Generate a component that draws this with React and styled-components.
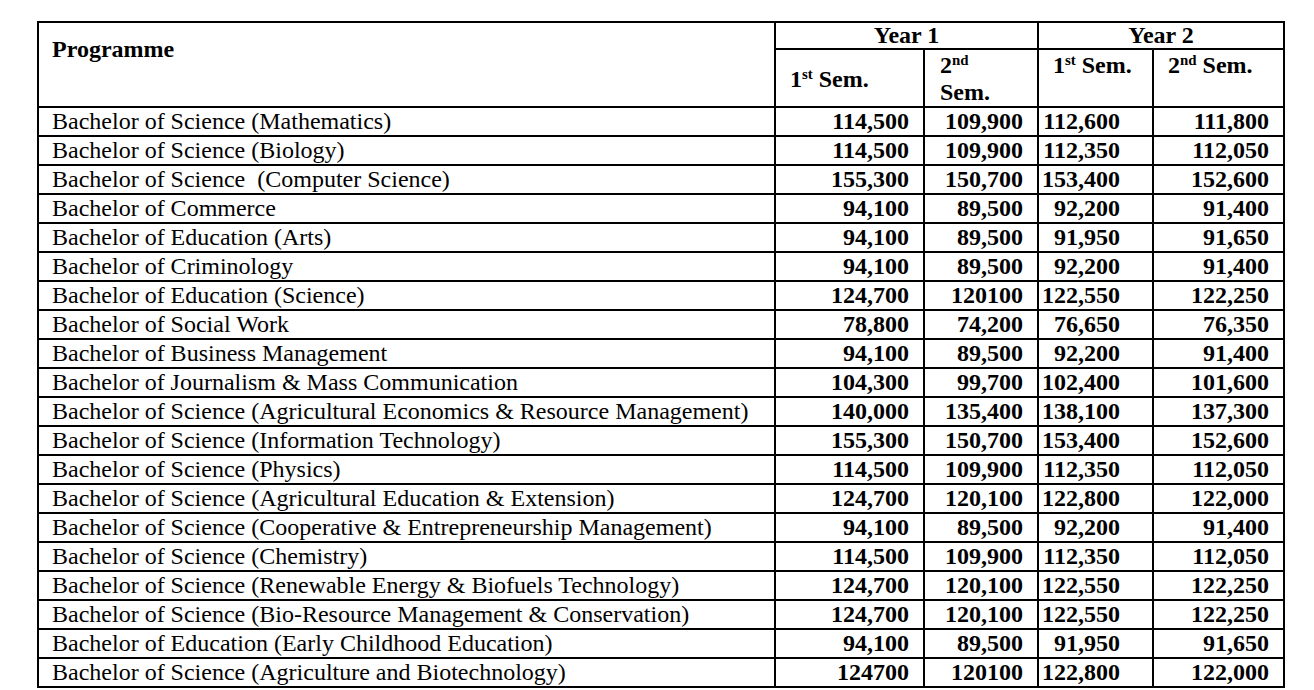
import React from 'react';
import styled, { createGlobalStyle } from 'styled-components';

const GlobalStyle = createGlobalStyle`
  html, body { margin: 0; padding: 0; background: #ffffff; }
  body { font-family: "Liberation Serif", "Times New Roman", serif; color: #000; }
`;

const Page = styled.div`
  padding: 21px 0 0 37px;
`;

const Table = styled.table`
  border-collapse: collapse;
  table-layout: fixed;
  width: 1248px;
  font-family: "Liberation Serif", "Times New Roman", serif;
  font-size: 24px;
  color: #000;
  border: 2px solid #000;
`;

const HeadCell = styled.th`
  border: 2px solid #000;
  font-weight: 700;
  line-height: ${(p) => (p.$short ? '25px' : '27px')};
  padding: ${(p) => p.$pad || '0 14px'};
  text-align: ${(p) => p.$align || 'left'};
  vertical-align: ${(p) => p.$valign || 'top'};
  white-space: ${(p) => (p.$nowrap ? 'nowrap' : 'normal')};
`;

const Sup = styled.sup`
  font-size: 0.62em;
  line-height: 0;
  vertical-align: 0.55em;
`;

const NameCell = styled.td`
  border: 2px solid #000;
  padding: 0 13px;
  line-height: 27px;
  text-align: left;
  white-space: nowrap;
  overflow: hidden;
`;

const NumCell = styled.td`
  border: 2px solid #000;
  padding: 0 ${(p) => p.$right || 14}px 0 0;
  line-height: 27px;
  font-weight: 700;
  text-align: right;
  white-space: nowrap;
`;

const rows = [
  ['Bachelor of Science (Mathematics)', '114,500', '109,900', '112,600', '111,800'],
  ['Bachelor of Science (Biology)', '114,500', '109,900', '112,350', '112,050'],
  ['Bachelor of Science\u00a0 (Computer Science)', '155,300', '150,700', '153,400', '152,600'],
  ['Bachelor of Commerce', '94,100', '89,500', '92,200', '91,400'],
  ['Bachelor of Education (Arts)', '94,100', '89,500', '91,950', '91,650'],
  ['Bachelor of Criminology', '94,100', '89,500', '92,200', '91,400'],
  ['Bachelor of Education (Science)', '124,700', '120100', '122,550', '122,250'],
  ['Bachelor of Social Work', '78,800', '74,200', '76,650', '76,350'],
  ['Bachelor of Business Management', '94,100', '89,500', '92,200', '91,400'],
  ['Bachelor of Journalism & Mass Communication', '104,300', '99,700', '102,400', '101,600'],
  ['Bachelor of Science (Agricultural Economics & Resource Management)', '140,000', '135,400', '138,100', '137,300'],
  ['Bachelor of Science (Information Technology)', '155,300', '150,700', '153,400', '152,600'],
  ['Bachelor of Science (Physics)', '114,500', '109,900', '112,350', '112,050'],
  ['Bachelor of Science (Agricultural Education & Extension)', '124,700', '120,100', '122,800', '122,000'],
  ['Bachelor of Science (Cooperative & Entrepreneurship Management)', '94,100', '89,500', '92,200', '91,400'],
  ['Bachelor of Science (Chemistry)', '114,500', '109,900', '112,350', '112,050'],
  ['Bachelor of Science (Renewable Energy & Biofuels Technology)', '124,700', '120,100', '122,550', '122,250'],
  ['Bachelor of Science (Bio-Resource Management & Conservation)', '124,700', '120,100', '122,550', '122,250'],
  ['Bachelor of Education (Early Childhood Education)', '94,100', '89,500', '91,950', '91,650'],
  ['Bachelor of Science (Agriculture and Biotechnology)', '124700', '120100', '122,800', '122,000'],
];

export default function App() {
  return (
    <>
      <GlobalStyle />
      <Page>
        <Table>
          <colgroup>
            <col style={{ width: 737 }} />
            <col style={{ width: 149 }} />
            <col style={{ width: 114 }} />
            <col style={{ width: 115 }} />
            <col style={{ width: 131 }} />
          </colgroup>
          <thead>
            <tr>
              <HeadCell rowSpan={2} $pad="13px 13px 0">Programme</HeadCell>
              <HeadCell colSpan={2} $align="center" $short>Year 1</HeadCell>
              <HeadCell colSpan={2} $align="center" $short>Year 2</HeadCell>
            </tr>
            <tr>
              <HeadCell $valign="middle" $nowrap $pad="2px 14px 0">
                1<Sup>st</Sup> Sem.
              </HeadCell>
              <HeadCell $pad="2px 34px 0 15px">
                2<Sup>nd</Sup> Sem.
              </HeadCell>
              <HeadCell $nowrap $pad="2px 14px 0">
                1<Sup>st</Sup> Sem.
              </HeadCell>
              <HeadCell $nowrap $pad="2px 14px 0">
                2<Sup>nd</Sup> Sem.
              </HeadCell>
            </tr>
          </thead>
          <tbody>
            {rows.map((r, i) => (
              <tr key={i}>
                <NameCell>{r[0]}</NameCell>
                <NumCell>{r[1]}</NumCell>
                <NumCell>{r[2]}</NumCell>
                <NumCell $right={32}>{r[3]}</NumCell>
                <NumCell>{r[4]}</NumCell>
              </tr>
            ))}
          </tbody>
        </Table>
      </Page>
    </>
  );
}
